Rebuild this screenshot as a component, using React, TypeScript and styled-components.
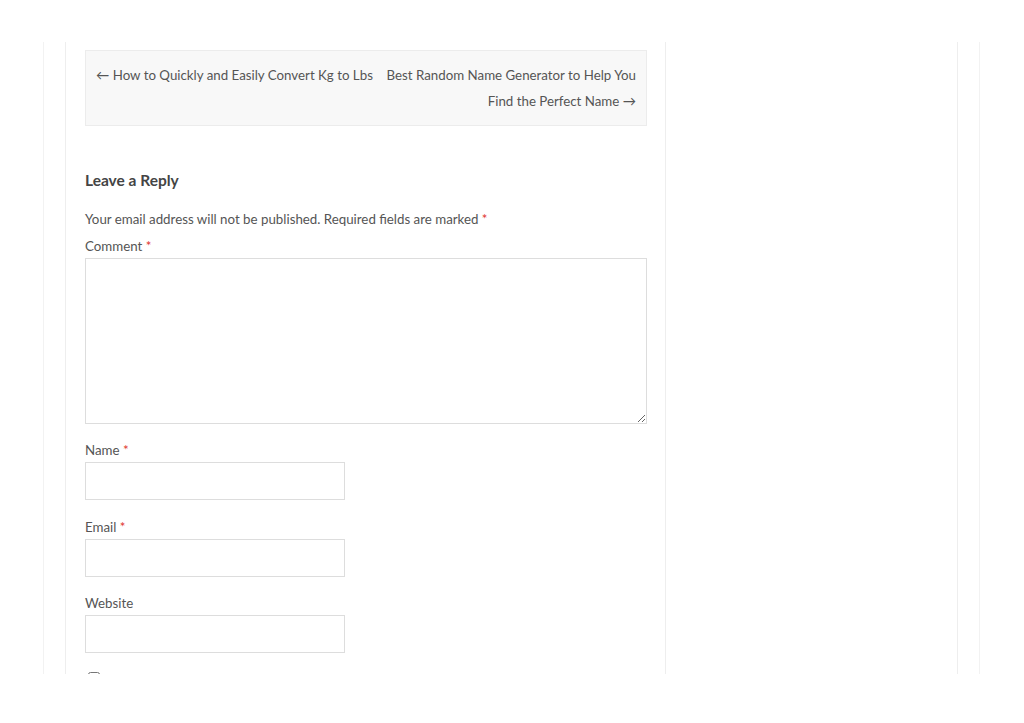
import styled, { createGlobalStyle } from 'styled-components';

const GlobalStyle = createGlobalStyle`
  html, body {
    margin: 0;
    padding: 0;
    background: #ffffff;
  }
  body {
    font-family: Lato, 'Noto Sans', sans-serif;
    color: #555;
  }
`;

const Frame = styled.div`
  box-sizing: border-box;
  width: 937px;
  height: 632px;
  margin: 42px 0 0 43px;
  padding: 0 21px;
  border-left: 1px solid #f2f2f2;
  border-right: 1px solid #f2f2f2;
  overflow: hidden;
`;

const Columns = styled.div`
  display: grid;
  grid-template-columns: 600px 1fr;
  height: 100%;
  border-left: 1px solid #eeeeee;
  border-right: 1px solid #eeeeee;
`;

const Main = styled.main`
  box-sizing: border-box;
  padding: 8px 18px 0 19px;
  border-right: 1px solid #eeeeee;
`;

const Sidebar = styled.aside``;

const PostNav = styled.nav`
  display: flex;
  padding: 11px 10px;
  background: #f8f8f8;
  border: 1px solid #ececec;
  font-size: 13.3px;
  line-height: 26px;
`;

const NavLink = styled.a<{ $align: 'left' | 'right' }>`
  flex: 1 1 50%;
  min-width: 0;
  color: #555;
  text-decoration: none;
  text-align: ${p => p.$align};
  white-space: ${p => (p.$align === 'left' ? 'nowrap' : 'normal')};
`;

const Heading = styled.h3`
  margin: 43px 0 0;
  font-size: 15.5px;
  line-height: 22px;
  font-weight: 700;
  color: #444;
`;

const Notes = styled.p`
  margin: 17px 0 0;
  font-size: 13.3px;
  line-height: 23px;
`;

const Required = styled.span`
  color: #e0362f;
`;

const Field = styled.div<{ $gap: number }>`
  margin-top: ${p => p.$gap}px;
`;

const Label = styled.label`
  display: block;
  font-size: 13.3px;
  line-height: 23px;
  color: #555;
`;

const TextArea = styled.textarea`
  display: block;
  box-sizing: border-box;
  width: 562px;
  height: 166px;
  margin: 0;
  padding: 6px;
  border: 1px solid #dddddd;
  background: #fff;
  font: inherit;
`;

const Input = styled.input`
  display: block;
  box-sizing: border-box;
  width: 260px;
  height: 38px;
  margin: 0;
  padding: 0 8px;
  border: 1px solid #dddddd;
  background: #fff;
  font: inherit;
`;

const Consent = styled.div`
  margin-top: 19px;
  padding-left: 3px;
`;

const Checkbox = styled.input`
  display: block;
  margin: 0;
  width: 12px;
  height: 12px;
`;

export default function App() {
  return (
    <>
      <GlobalStyle />
      <Frame>
        <Columns>
          <Main>
            <PostNav>
              <NavLink $align="left" href="#">
                ← How to Quickly and Easily Convert Kg to Lbs
              </NavLink>
              <NavLink $align="right" href="#">
                Best Random Name Generator to Help You Find the Perfect Name →
              </NavLink>
            </PostNav>

            <Heading>Leave a Reply</Heading>
            <Notes>
              Your email address will not be published. Required fields are marked <Required>*</Required>
            </Notes>

            <Field $gap={4}>
              <Label>
                Comment <Required>*</Required>
              </Label>
              <TextArea />
            </Field>

            <Field $gap={15}>
              <Label>
                Name <Required>*</Required>
              </Label>
              <Input type="text" />
            </Field>

            <Field $gap={16}>
              <Label>
                Email <Required>*</Required>
              </Label>
              <Input type="email" />
            </Field>

            <Field $gap={15}>
              <Label>Website</Label>
              <Input type="url" />
            </Field>

            <Consent>
              <Checkbox type="checkbox" />
            </Consent>
          </Main>
          <Sidebar />
        </Columns>
      </Frame>
    </>
  );
}
